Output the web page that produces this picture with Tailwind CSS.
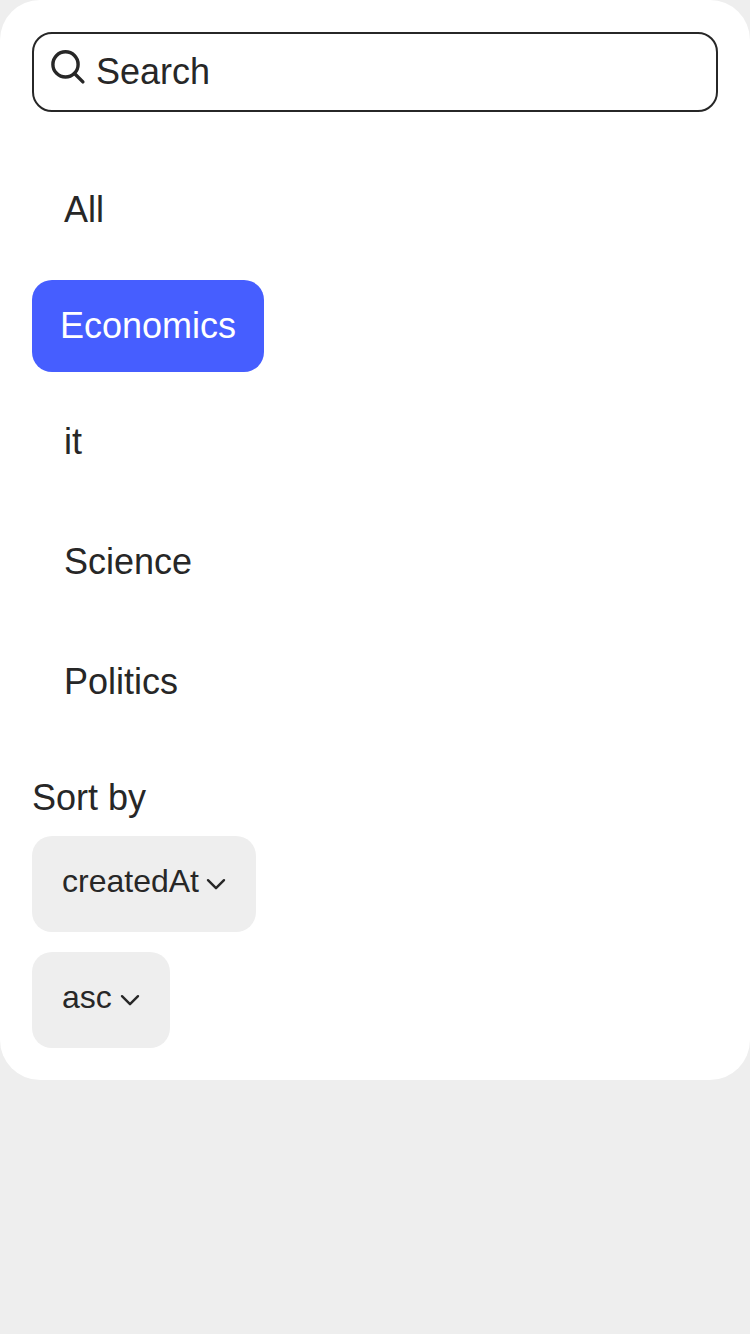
<!DOCTYPE html>
<html lang="en"><head><meta charset="utf-8"><title>Articles filter</title>
<script src="https://cdn.jsdelivr.net/npm/@tailwindcss/browser@4"></script></head>
<body class="min-h-screen bg-[#eeeeee] font-['Liberation_Sans',sans-serif] text-[#272727]">
<main class="flex h-[1080px] flex-col items-start rounded-[40px] bg-white p-8 text-[36px] leading-[40px]">
<label class="flex h-20 w-full items-center rounded-[20px] border-2 border-[#272727] pl-4">
<svg class="-mt-2 h-9 w-9 shrink-0" viewBox="0 0 36 36" fill="none" stroke="#272727" stroke-width="3.4" stroke-linecap="round"><circle cx="15.5" cy="14.4" r="12.6"/><path d="M24.5 23.5l8.4 8.4"/></svg>
<span class="ml-2.5">Search</span></label>
<nav class="mt-[52px] flex flex-col items-start">
<button class="h-[92px] px-8">All</button>
<button class="mt-6 h-[92px] w-[232px] rounded-[20px] bg-[#465eff] text-white">Economics</button>
<button class="mt-6 h-[92px] px-8">it</button>
<button class="mt-7 h-[92px] px-8">Science</button>
<button class="mt-7 h-[92px] px-8">Politics</button>
</nav>
<p class="mt-[50px]">Sort by</p>
<button class="mt-[18px] flex h-24 w-56 items-center rounded-[20px] bg-[#eeeeee] pl-[30px] text-[32px]"><span class="-mt-1.5">createdAt</span><svg class="ml-[7px] h-5 w-5" viewBox="0 0 20 20" fill="none" stroke="#272727" stroke-width="2.4" stroke-linecap="round" stroke-linejoin="round"><path d="M2 6.2l8 8 8-8"/></svg></button>
<button class="mt-5 flex h-24 w-[138px] items-center rounded-[20px] bg-[#eeeeee] pl-[30px] text-[32px]"><span class="-mt-1.5">asc</span><svg class="ml-2 h-5 w-5" viewBox="0 0 20 20" fill="none" stroke="#272727" stroke-width="2.4" stroke-linecap="round" stroke-linejoin="round"><path d="M2 6.2l8 8 8-8"/></svg></button>
</main></body></html>
